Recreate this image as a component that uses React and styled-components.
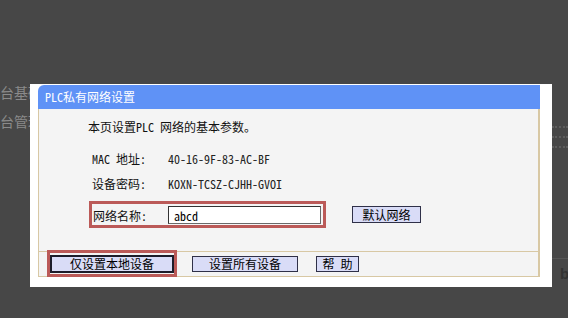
import React from 'react';
import styled, { createGlobalStyle } from 'styled-components';

const GlobalStyle = createGlobalStyle`
  html, body {
    margin: 0;
    padding: 0;
    background: #474747;
    overflow: hidden;
  }
`;

const FONT = `"Noto Sans Mono CJK SC", "Noto Sans CJK SC", sans-serif`;

const Page = styled.div`
  position: relative;
  width: 568px;
  height: 318px;
  background: #474747;
  display: flex;
  justify-content: space-between;
  overflow: hidden;
  font-family: ${FONT};
`;

const LeftBg = styled.div`
  width: 30px;
  padding-top: 84px;
  display: flex;
  flex-direction: column;
  gap: 12px;
  overflow: hidden;
`;

const BgText = styled.div`
  font-size: 14px;
  line-height: 17px;
  color: #8a8a8a;
  white-space: nowrap;
`;

const RightBg = styled.div`
  width: 16px;
  padding-top: 124px;
  display: flex;
  flex-direction: column;
  overflow: hidden;
`;

const Dots = styled.div`
  height: 3px;
  margin: 2px 0 3px;
  border-top: 2px dotted #5e5e5e;
`;

const BgRule = styled.div`
  margin-top: 104px;
  height: 1px;
  background: #565656;
`;

const BgLetter = styled.div`
  margin: 6px 0 0 8px;
  font: bold 15px "Liberation Sans", sans-serif;
  color: #333;
`;

const Dialog = styled.div`
  position: absolute;
  left: 30px;
  top: 84px;
  width: 522px;
  height: 203px;
  box-sizing: border-box;
  background: #fff;
  padding: 1px 12px 0 8px;
`;

const Frame = styled.div`
  width: 502px;
  display: flex;
  flex-direction: column;
`;

const Header = styled.div`
  height: 24px;
  background: #5f92f6;
  border-top-left-radius: 6px;
  color: #fff;
  font-size: 12px;
  line-height: 24px;
  padding-left: 7px;
`;

const Body = styled.div`
  height: 142px;
  box-sizing: border-box;
  background: #f4f4f4;
  border-left: 1px solid #d8c8a4;
  border-right: 2px solid #d8c8a4;
  padding: 11px 0 0 53px;
  font-size: 12px;
  color: #111;
`;

const Intro = styled.div`
  margin-left: -4px;
  line-height: 14px;
  font-size: 12px;
`;

const Row = styled.div`
  display: flex;
  align-items: center;
  height: 14px;
  margin-top: ${p => p.$gap}px;
`;

const Label = styled.div`
  width: 76px;
  flex: none;
`;

const Value = styled.div`
  color: #222;
`;

const NameRow = styled.div`
  display: flex;
  align-items: center;
  margin-top: 11px;
  margin-left: -3px;
`;

const RedBox = styled.div`
  display: flex;
  align-items: center;
  border: 3px solid #bb5a58;
  padding: 2px 2px 1px 1px;
`;

const BoxLabel = styled(Label)`
  width: 75px;
`;

const Input = styled.input`
  width: 153px;
  height: 18px;
  box-sizing: border-box;
  margin: 0;
  padding: 0 5px;
  border: 1px solid #6a6a6a;
  border-top-color: #333;
  border-left-color: #333;
  background: #fff;
  font-family: ${FONT};
  font-size: 12px;
  color: #000;
  outline: none;
`;

const Button = styled.button`
  width: ${p => p.$w}px;
  height: ${p => p.$h || 17}px;
  box-sizing: border-box;
  margin: 0 0 0 ${p => p.$ml || 0}px;
  padding: 0;
  background: #d9dcf7;
  border: ${p => (p.$focus ? '2px solid #1c1c2a' : '1px solid #2f3048')};
  font-family: ${FONT};
  font-size: 12px;
  line-height: 14px;
  color: #000;
  cursor: pointer;
  white-space: pre;
`;

const Bar = styled.div`
  height: 26px;
  box-sizing: border-box;
  background: #f4f4f4;
  border: 1px solid #d8c8a4;
  border-right-width: 2px;
  display: flex;
  align-items: center;
  padding-left: 8px;
`;

const Highlight = styled.div`
  border: 3px solid #bb5a58;
  padding: 2px 0 1px 0;
  margin: -2px 0 -1px;
  display: flex;
`;

export default function App() {
  return (
    <>
      <GlobalStyle />
      <Page>
        <LeftBg>
          <BgText>台基础</BgText>
          <BgText>台管理</BgText>
        </LeftBg>
        <RightBg>
          <Dots />
          <Dots />
          <Dots />
          <BgRule />
          <BgLetter>b</BgLetter>
        </RightBg>

        <Dialog>
          <Frame>
            <Header>PLC私有网络设置</Header>
            <Body>
              <Intro>本页设置PLC 网络的基本参数。</Intro>
              <Row $gap={17}>
                <Label>MAC 地址:</Label>
                <Value>40-16-9F-83-AC-BF</Value>
              </Row>
              <Row $gap={11}>
                <Label>设备密码:</Label>
                <Value>KOXN-TCSZ-CJHH-GVOI</Value>
              </Row>
              <NameRow>
                <RedBox>
                  <BoxLabel>网络名称:</BoxLabel>
                  <Input defaultValue="abcd" />
                </RedBox>
                <Button $w={69} $ml={26}>默认网络</Button>
              </NameRow>
            </Body>
            <Bar>
              <Highlight>
                <Button $w={124} $h={18} $focus>仅设置本地设备</Button>
              </Highlight>
              <Button $w={106} $h={16} $ml={15}>设置所有设备</Button>
              <Button $w={43} $h={16} $ml={18}>帮 助</Button>
            </Bar>
          </Frame>
        </Dialog>
      </Page>
    </>
  );
}
